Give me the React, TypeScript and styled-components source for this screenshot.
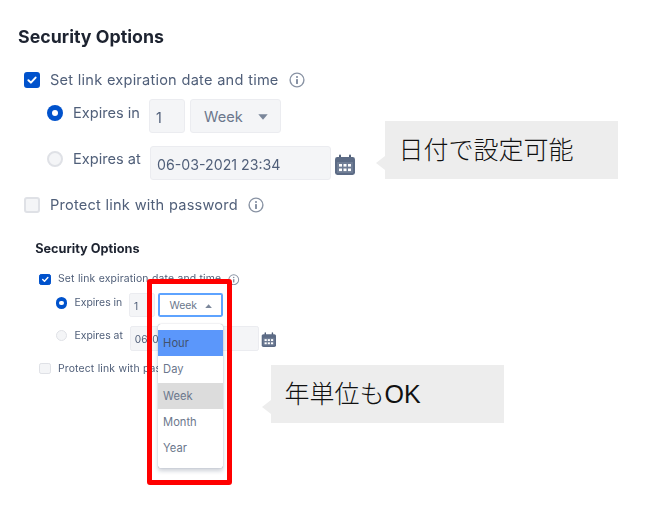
import React from "react";
import styled, { createGlobalStyle } from "styled-components";

const Global = createGlobalStyle`
  html, body { margin: 0; padding: 0; background: #fff; }
  body { font-family: Inter, "Liberation Sans", sans-serif; }
`;

const Page = styled.div`
  position: relative;
  width: 665px;
  height: 510px;
  overflow: hidden;
  box-sizing: border-box;
  padding: 26px 0 0 18px;
  background: #fff;
`;

const Panel = styled.section<{ $compact?: boolean }>`
  width: 400px;
  filter: blur(0.35px);
  ${(p) => (p.$compact ? "zoom: 0.715; margin: 36px 0 0 24px;" : "")}
`;

const Title = styled.h2`
  margin: 0 0 23px;
  font-size: 17.8px;
  line-height: 21px;
  font-weight: 700;
  color: #1d2330;
`;

const CheckRow = styled.div<{ $gapTop?: number }>`
  display: flex;
  align-items: center;
  height: 20px;
  margin: ${(p) => p.$gapTop ?? 0}px 0 0 6px;
`;

const CheckBox = styled.span<{ $on?: boolean }>`
  flex: none;
  display: flex;
  align-items: center;
  justify-content: center;
  box-sizing: border-box;
  width: 16px;
  height: 16px;
  border-radius: 3px;
  background: ${(p) => (p.$on ? "#0052cc" : "#f4f5f7")};
  border: 2px solid ${(p) => (p.$on ? "#0052cc" : "#dfe1e6")};
`;

const Label = styled.span<{ $wide?: boolean }>`
  margin-left: 10px;
  font-size: 14.6px;
  line-height: 20px;
  color: #505f79;
  white-space: nowrap;
  letter-spacing: ${(p) => (p.$wide ? "0.2px" : "0")};
  word-spacing: ${(p) => (p.$wide ? "0.3px" : "0")};
`;

const InfoWrap = styled.span`
  display: flex;
  margin-left: 10px;
`;

const ChoiceRow = styled.div<{ $gapTop: number }>`
  display: flex;
  align-items: flex-start;
  margin: ${(p) => p.$gapTop}px 0 0 29px;
`;

const RadioCell = styled.div<{ $shift: number }>`
  display: flex;
  align-items: center;
  height: 20px;
  margin-top: ${(p) => p.$shift}px;
  width: ${(p) => (p.$shift === 4 ? 102 : 103)}px;
`;

const Radio = styled.span<{ $on?: boolean }>`
  flex: none;
  display: flex;
  align-items: center;
  justify-content: center;
  box-sizing: border-box;
  width: 16px;
  height: 16px;
  border-radius: 50%;
  background: ${(p) => (p.$on ? "#0052cc" : "#f4f5f7")};
  border: ${(p) => (p.$on ? "none" : "2px solid #dfe1e6")};
`;

const RadioDot = styled.span`
  width: 6px;
  height: 6px;
  border-radius: 50%;
  background: #fff;
`;

const Field = styled.div<{ $width: number }>`
  display: flex;
  align-items: center;
  box-sizing: border-box;
  width: ${(p) => p.$width}px;
  height: 34px;
  padding: 2px 0 0 6px;
  border-radius: 3px;
  background: #f4f5f7;
  border: 1px solid #ebecf0;
  font-size: 14.2px;
  color: #505f79;
  white-space: nowrap;
`;

const SelectWrap = styled.div`
  position: relative;
  margin-left: 5px;
`;

const Select = styled.div<{ $open?: boolean }>`
  display: flex;
  align-items: center;
  justify-content: space-between;
  box-sizing: border-box;
  width: 91px;
  height: 34px;
  padding: 2px 12px 0 13px;
  border-radius: 3px;
  background: ${(p) => (p.$open ? "#fff" : "#f4f5f7")};
  border: ${(p) => (p.$open ? "3px solid #5ea3ff" : "1px solid #ebecf0")};
  font-size: 14.6px;
  color: #6b778c;
`;

const Menu = styled.ul`
  position: absolute;
  z-index: 2;
  top: 43px;
  left: 0;
  width: 91px;
  margin: 0;
  padding: 9px 0 10px;
  box-sizing: border-box;
  list-style: none;
  background: #fff;
  border-radius: 4px;
  box-shadow: 0 0 1px rgba(9, 30, 66, 0.55), 0 3px 6px rgba(9, 30, 66, 0.2);
`;

const MenuItem = styled.li<{ $state?: "hover" | "current" }>`
  height: 36.7px;
  line-height: 38.5px;
  padding-left: 7px;
  font-size: 15.6px;
  color: ${(p) => (p.$state === "hover" ? "#42526e" : "#6b778c")};
  background: ${(p) =>
    p.$state === "hover" ? "#5b97fb" : p.$state === "current" ? "#dcdcdc" : "#fff"};
`;

const DateIcon = styled.span`
  display: flex;
  margin: 8px 0 0 3px;
`;

const Highlight = styled.div`
  position: absolute;
  z-index: 3;
  left: 147px;
  top: 279px;
  width: 85px;
  height: 206px;
  box-sizing: border-box;
  border: 5.5px solid #ff0000;
  border-radius: 3px;
`;

const Callout = styled.div<{ $left: number; $top: number; $tip: number }>`
  position: absolute;
  z-index: 3;
  left: ${(p) => p.$left}px;
  top: ${(p) => p.$top}px;
  width: 233px;
  height: 58px;
  box-sizing: border-box;
  padding: 0 0 4px 13.500px;
  display: flex;
  align-items: center;
  background: #ededed;
  color: #111;
  font-family: "Liberation Sans", "Noto Sans CJK JP", sans-serif;
  font-size: 25px;
  font-weight: 300;
  white-space: nowrap;

  &::before {
    content: "";
    position: absolute;
    left: -9px;
    top: ${(p) => p.$tip}px;
    border-style: solid;
    border-width: 7px 9px 7px 0;
    border-color: transparent #ededed transparent transparent;
  }
`;

const CheckMark = () => (
  <svg width="12" height="12" viewBox="0 0 12 12" fill="none">
    <path d="M2.4 6.2 4.9 8.6 9.6 3.6" stroke="#fff" strokeWidth="2" strokeLinecap="round" strokeLinejoin="round" />
  </svg>
);

const InfoIcon = () => (
  <svg width="16" height="16" viewBox="0 0 16 16" fill="none">
    <circle cx="8" cy="8" r="6.9" stroke="#8993a4" strokeWidth="1.4" />
    <circle cx="8" cy="5" r="1" fill="#7a869a" />
    <rect x="7.1" y="7" width="1.8" height="5" rx="0.6" fill="#7a869a" />
  </svg>
);

const CalendarIcon = () => (
  <svg width="22" height="22" viewBox="0 0 22 22">
    <rect x="5" y="0.500" width="2" height="5" rx="1" fill="#505f79" />
    <rect x="15" y="0.500" width="2" height="5" rx="1" fill="#505f79" />
    <rect x="1" y="3" width="20" height="18" rx="2.400" fill="#5c6b85" />
    <rect x="3" y="8" width="16" height="11" rx="0.500" fill="#6f7d95" />
    {[5, 9.5, 14].map((x) =>
      [10, 14.5].map((y) => <rect key={`${x}-${y}`} x={x} y={y} width="3" height="2.600" fill="#fff" />)
    )}
  </svg>
);

const Caret = ({ up }: { up?: boolean }) => (
  <svg width="10" height="6" viewBox="0 0 10 6">
    <path d={up ? "M5 0.300 9.700 5.700H0.300Z" : "M0.300 0.300H9.700L5 5.700Z"} fill="#7a869a" />
  </svg>
);

const OptionsPanel = ({ compact }: { compact?: boolean }) => (
  <Panel $compact={compact}>
    <Title>Security Options</Title>
    <CheckRow>
      <CheckBox $on>
        <CheckMark />
      </CheckBox>
      <Label $wide>Set link expiration date and time</Label>
      <InfoWrap>
        <InfoIcon />
      </InfoWrap>
    </CheckRow>
    <ChoiceRow $gapTop={9}>
      <RadioCell $shift={4}>
        <Radio $on>
          <RadioDot />
        </Radio>
        <Label>Expires in</Label>
      </RadioCell>
      <Field $width={36}>1</Field>
      <SelectWrap>
        <Select $open={compact}>
          Week
          <Caret up={compact} />
        </Select>
        {compact && (
          <Menu>
            <MenuItem $state="hover">Hour</MenuItem>
            <MenuItem>Day</MenuItem>
            <MenuItem $state="current">Week</MenuItem>
            <MenuItem>Month</MenuItem>
            <MenuItem>Year</MenuItem>
          </Menu>
        )}
      </SelectWrap>
    </ChoiceRow>
    <ChoiceRow $gapTop={13}>
      <RadioCell $shift={3}>
        <Radio />
        <Label>Expires at</Label>
      </RadioCell>
      <Field $width={181}>06-03-2021 23:34</Field>
      <DateIcon>
        <CalendarIcon />
      </DateIcon>
    </ChoiceRow>
    <CheckRow $gapTop={15}>
      <CheckBox />
      <Label $wide>Protect link with password</Label>
      <InfoWrap>
        <InfoIcon />
      </InfoWrap>
    </CheckRow>
  </Panel>
);

export default function App() {
  return (
    <Page>
      <Global />
      <OptionsPanel />
      <OptionsPanel compact />
      <Highlight />
      <Callout $left={385} $top={121} $tip={35}>日付で設定可能</Callout>
      <Callout $left={271} $top={365} $tip={35}>年単位もOK</Callout>
    </Page>
  );
}
